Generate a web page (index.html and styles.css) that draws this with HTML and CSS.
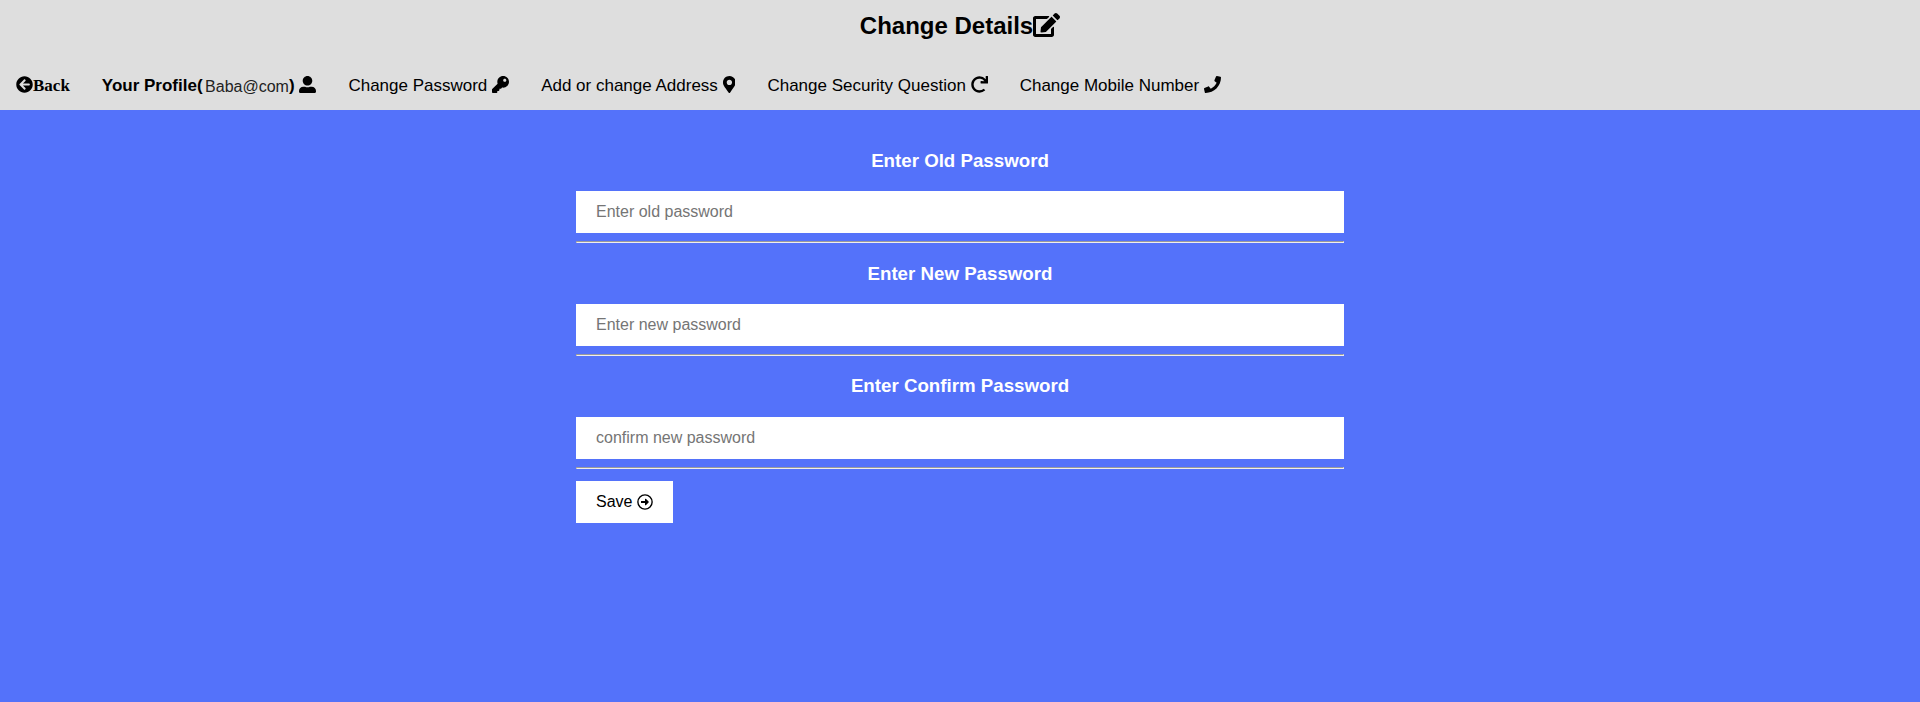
FILE: index.html
```html
<!DOCTYPE html>
<html lang="en">
<head>
<meta charset="utf-8">
<title>Change Details</title>
<link rel="stylesheet" href="styles.css">
</head>
<body>
<header class="header">
<h1 class="title">Change Details<svg class="icon wide" viewBox="0 0 576 512"><path d="M402.600 83.200l90.200 90.200c3.800 3.800 3.800 10 0 13.800L274.400 405.600l-92.800 10.300c-12.400 1.400-22.900-9.100-21.500-21.500l10.300-92.800L388.800 83.200c3.800-3.800 10-3.800 13.800 0zm162-22.900l-48.800-48.800c-15.200-15.200-39.900-15.200-55.200 0l-35.400 35.400c-3.800 3.800-3.800 10 0 13.800l90.200 90.200c3.800 3.800 10 3.800 13.800 0l35.400-35.400c15.200-15.300 15.200-40 0-55.200zM384 346.200V448H64V128h229.800c3.200 0 6.200-1.300 8.500-3.500l40-40c7.600-7.600 2.200-20.500-8.500-20.500H48C21.500 64 0 85.500 0 112v352c0 26.500 21.500 48 48 48h352c26.500 0 48-21.500 48-48V306.200c0-10.700-12.900-16-20.500-8.500l-40 40c-2.200 2.300-3.500 5.300-3.500 8.500z"/></svg></h1>
<nav class="nav">
<a class="item back"><svg class="icon" viewBox="0 0 512 512"><path d="M256 504C119 504 8 393 8 256S119 8 256 8s248 111 248 248-111 248-248 248zm28.900-143.600L209.400 288H392c13.300 0 24-10.700 24-24v-16c0-13.300-10.700-24-24-24H209.400l75.500-72.400c9.700-9.300 9.900-24.800.4-34.300l-11-10.900c-9.400-9.400-24.600-9.400-33.900 0L107.700 239c-9.400 9.400-9.400 24.600 0 33.900l132.700 132.700c9.400 9.400 24.600 9.400 33.900 0l11-10.900c9.500-9.500 9.300-25-.4-34.300z"/></svg><span>Back</span></a>
<a class="item profile"><b>Your Profile(</b><span class="user">Baba@com</span><b>)</b><svg class="icon gap" viewBox="0 0 512 512"><path d="M256 288c79.500 0 144-64.500 144-144S335.500 0 256 0 112 64.500 112 144s64.500 144 144 144zm128 32h-55.100c-22.200 10.200-46.900 16-72.900 16s-50.600-5.800-72.900-16H128C57.300 320 0 377.300 0 448v16c0 26.500 21.500 48 48 48h416c26.500 0 48-21.500 48-48v-16c0-70.700-57.300-128-128-128z"/></svg></a>
<a class="item">Change Password<svg class="icon gap" viewBox="0 0 512 512"><path d="M512 176.001C512 273.203 433.202 352 336 352c-11.220 0-22.190-1.062-32.827-3.069l-24.012 27.014A23.999 23.999 0 0 1 261.223 384H224v40c0 13.255-10.745 24-24 24h-40v40c0 13.255-10.745 24-24 24H24c-13.255 0-24-10.745-24-24v-78.059c0-6.365 2.529-12.470 7.029-16.971l161.802-161.802C163.108 213.814 160 195.271 160 176 160 78.798 238.797.001 335.999 0 433.488-.001 512 78.511 512 176.001zM336 128c0 26.510 21.490 48 48 48s48-21.490 48-48-21.490-48-48-48-48 21.490-48 48z"/></svg></a>
<a class="item">Add or change Address<svg class="icon gap pin" viewBox="0 0 384 512"><path d="M172.268 501.670C26.970 291.031 0 269.413 0 192 0 85.961 85.961 0 192 0s192 85.961 192 192c0 77.413-26.970 99.031-172.268 309.670-9.535 13.774-29.930 13.773-39.464 0zM192 272c44.183 0 80-35.817 80-80s-35.817-80-80-80-80 35.817-80 80 35.817 80 80 80z"/></svg></a>
<a class="item">Change Security Question<svg class="icon gap" viewBox="0 0 512 512"><path d="M500.330 0h-47.410a12 12 0 0 0-12 12.570l4 82.760A247.420 247.420 0 0 0 256 8C119.340 8 7.900 119.530 8 256.190 8.100 393.070 119.100 504 256 504a247.100 247.100 0 0 0 166.180-63.910 12 12 0 0 0 .48-17.430l-34-34a12 12 0 0 0-16.380-.55A176 176 0 1 1 402.100 157.800l-101.530-4.870a12 12 0 0 0-12.570 12v47.410a12 12 0 0 0 12 12h200.330a12 12 0 0 0 12-12V12a12 12 0 0 0-12-12z"/></svg></a>
<a class="item">Change Mobile Number<svg class="icon gap" viewBox="0 0 512 512"><path d="M493.400 24.600l-104-24c-11.300-2.600-22.900 3.300-27.500 13.900l-48 112c-4.200 9.800-1.400 21.300 6.900 28l60.600 49.600c-36 76.700-98.900 140.500-177.200 177.200l-49.600-60.600c-6.800-8.300-18.200-11.100-28-6.900l-112 48C3.900 366.500-2 378.100.6 389.400l24 104C27.100 504.200 36.700 512 48 512c256.100 0 464-207.500 464-464 0-11.200-7.700-20.900-18.600-23.400z"/></svg></a>
</nav>
</header>
<main>
<form class="form">
<h2 class="label">Enter Old Password</h2>
<input class="field" type="text" placeholder="Enter old password">
<hr class="line">
<h2 class="label">Enter New Password</h2>
<input class="field" type="text" placeholder="Enter new password">
<hr class="line">
<h2 class="label raised">Enter Confirm Password</h2>
<input class="field" type="text" placeholder="confirm new password">
<hr class="line">
<button class="save" type="button">Save<svg class="icon arrow" viewBox="0 0 512 512"><circle class="ring" cx="256" cy="256" r="228"/><path d="M140 224h116v-59c0-15 18-22 28-12l92 92c6 6 6 16 0 22l-92 92c-10 10-28 3-28-12v-59H140c-7 0-12-5-12-12v-40c0-7 5-12 12-12z"/></svg></button>
</form>
</main>
</body>
</html>
```
FILE: styles.css
```css
* { box-sizing: border-box; }
body {
  margin: 0;
  min-height: 702px;
  background: #5472fa;
  color: #000;
  font-family: "Liberation Sans", Arial, sans-serif;
}
.header { height: 110px; background: #dedede; }
.title {
  margin: 0;
  height: 60px;
  padding-top: 12px;
  display: flex;
  justify-content: center;
  align-items: flex-start;
  font-size: 24px;
  line-height: 28px;
}
.icon { width: 1em; height: 1em; flex: none; fill: currentColor; }
.icon.wide { width: 27px; height: 24px; margin-top: 1px; }
.nav { display: flex; height: 50px; font-size: 17px; }
.item { display: flex; align-items: center; padding: 2px 16px 0; height: 50px; white-space: nowrap; }
.item .icon { margin-bottom: 3px; }
.gap { margin-left: 4.8px; }
.icon.pin { width: 12.75px; }
.back { font: bold 17px "Liberation Serif", "Times New Roman", serif; }
.user { font-size: 16px; margin: 1px 0 0 2.5px; color: #222; }
.form { width: 768px; margin: 0 auto; padding-top: 29px; }
.label {
  margin: 0;
  height: 52px;
  padding-top: 11px;
  color: #fff;
  font-size: 18.72px;
  line-height: 22px;
  text-align: center;
}
.raised { padding-top: 10px; }
.field {
  display: block;
  width: 100%;
  height: 42px;
  padding: 0 20px;
  border: 0;
  background: #fff;
  font: 16px "Liberation Sans", Arial, sans-serif;
}
.field::placeholder { color: #757575; }
.line {
  height: 2px;
  margin: 8px 0 9px;
  border: 1px solid;
  border-color: #9a9a9a #eee #eee #9a9a9a;
}
.save {
  display: flex;
  align-items: center;
  height: 42px;
  padding: 0 20px;
  border: 0;
  background: #fff;
  color: #000;
  font: 16px "Liberation Sans", Arial, sans-serif;
}
.line + .save { margin-top: 12px; }
.arrow { margin: 0 0 1px 4.5px; }
.ring { fill: none; stroke: currentColor; stroke-width: 44; }
```
